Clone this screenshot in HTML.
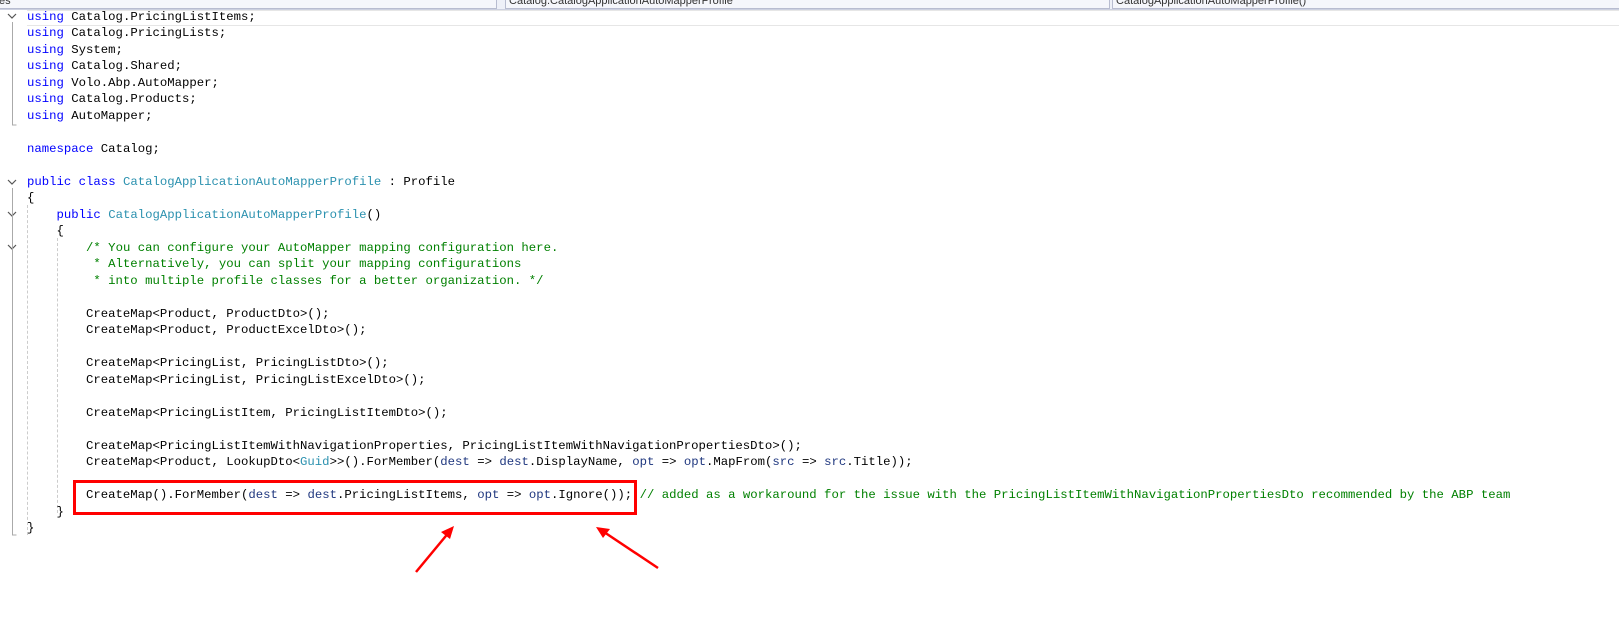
<!DOCTYPE html>
<html><head><style>
body{margin:0;width:1619px;height:638px;background:#fff;position:relative;overflow:hidden;font-family:"Liberation Mono",monospace;}
.top{position:absolute;left:0;top:0;width:1619px;height:9px;background:#eef0f8;border-bottom:1px solid #ccd0e0;}
.dd{position:absolute;top:-3px;height:10px;background:#f5f6fb;border:1px solid #b8bcd0;font:11px "Liberation Sans",sans-serif;color:#333;line-height:6px;overflow:hidden}
#code{position:absolute;left:27px;top:8.7px;font-size:12.3px;line-height:16.5px;white-space:pre;color:#000;}
.k{color:#0000ff}.t{color:#2b91af}.c{color:#008000}.p{color:#1f377f}
.gd{position:absolute;border-left:1px dashed #ccc;}
</style></head><body>
<div class="top">
<div class="dd" style="left:-2px;width:497px;">es</div>
<div class="dd" style="left:505px;width:603px;">&nbsp;Catalog.CatalogApplicationAutoMapperProfile</div>
<div class="dd" style="left:1112px;width:510px;">&nbsp;CatalogApplicationAutoMapperProfile()</div>
</div>
<div style="position:absolute;left:27px;top:10px;width:1592px;height:14px;border-top:1px solid #e6e6e6;border-bottom:1px solid #e6e6e6"></div>
<svg style="position:absolute;left:0;top:0" width="30" height="540">
<g stroke="#555" fill="none" stroke-width="1.2">
<path d="M8 14l4 4 4-4"/><path d="M8 180l4 4 4-4"/><path d="M8 212l4 4 4-4"/><path d="M8 245l4 4 4-4"/>
</g>
<g stroke="#aaa" fill="none"><path d="M12.5 22V125h4"/><path d="M12.5 188V535h4"/></g>
</svg>
<div class="gd" style="left:27px;top:205px;height:330px"></div>
<div class="gd" style="left:57px;top:238px;height:275px"></div>
<div id="code"><span class="k">using</span> Catalog.PricingListItems;
<span class="k">using</span> Catalog.PricingLists;
<span class="k">using</span> System;
<span class="k">using</span> Catalog.Shared;
<span class="k">using</span> Volo.Abp.AutoMapper;
<span class="k">using</span> Catalog.Products;
<span class="k">using</span> AutoMapper;

<span class="k">namespace</span> Catalog;

<span class="k">public</span> <span class="k">class</span> <span class="t">CatalogApplicationAutoMapperProfile</span> : Profile
{
    <span class="k">public</span> <span class="t">CatalogApplicationAutoMapperProfile</span>()
    {
        <span class="c">/* You can configure your AutoMapper mapping configuration here.
         * Alternatively, you can split your mapping configurations
         * into multiple profile classes for a better organization. */</span>

        CreateMap&lt;Product, ProductDto&gt;();
        CreateMap&lt;Product, ProductExcelDto&gt;();

        CreateMap&lt;PricingList, PricingListDto&gt;();
        CreateMap&lt;PricingList, PricingListExcelDto&gt;();

        CreateMap&lt;PricingListItem, PricingListItemDto&gt;();

        CreateMap&lt;PricingListItemWithNavigationProperties, PricingListItemWithNavigationPropertiesDto&gt;();
        CreateMap&lt;Product, LookupDto&lt;<span class="t">Guid</span>&gt;&gt;().ForMember(<span class="p">dest</span> =&gt; <span class="p">dest</span>.DisplayName, <span class="p">opt</span> =&gt; <span class="p">opt</span>.MapFrom(<span class="p">src</span> =&gt; <span class="p">src</span>.Title));

        CreateMap().ForMember(<span class="p">dest</span> =&gt; <span class="p">dest</span>.PricingListItems, <span class="p">opt</span> =&gt; <span class="p">opt</span>.Ignore()); <span class="c">// added as a workaround for the issue with the PricingListItemWithNavigationPropertiesDto recommended by the ABP team</span>
    }
}</div>
<div style="position:absolute;left:73px;top:480px;width:558px;height:29px;border:3px solid #f00"></div>
<svg style="position:absolute;left:0;top:0" width="1619" height="638">
<g stroke="#f00" stroke-width="2.5" fill="#f00">
<line x1="416" y1="572" x2="450" y2="531"/>
<line x1="658" y1="568" x2="601" y2="530"/>
</g>
<polygon points="454,526 441,532 450,539" fill="#f00"/>
<polygon points="596,527 610,529 603,538" fill="#f00"/>
</svg>
</body></html>
